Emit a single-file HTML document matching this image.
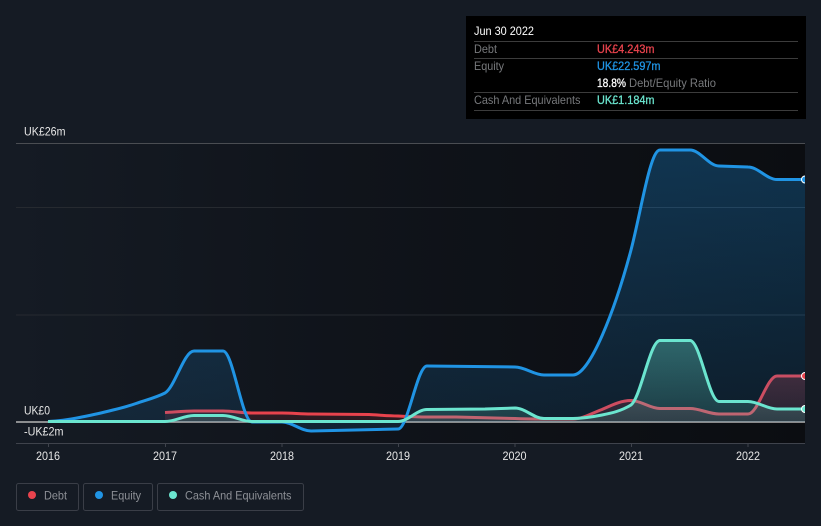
<!DOCTYPE html>
<html><head><meta charset="utf-8">
<style>
html,body{margin:0;padding:0;background:#151b24;width:821px;height:526px;overflow:hidden}
svg{display:block;font-family:"Liberation Sans",sans-serif}
</style></head><body>
<svg width="821" height="526" viewBox="0 0 821 526" xmlns="http://www.w3.org/2000/svg">
<defs>
<linearGradient id="bg" x1="0" x2="1" y1="0" y2="0"><stop offset="0" stop-color="#151b24"/><stop offset="0.4" stop-color="#10141b"/><stop offset="1" stop-color="#0b0d11"/></linearGradient>
<linearGradient id="eq" gradientUnits="userSpaceOnUse" x1="0" y1="144" x2="0" y2="422"><stop offset="0" stop-color="#1b8fe0" stop-opacity=".3"/><stop offset="1" stop-color="#1b8fe0" stop-opacity=".12"/></linearGradient>
<linearGradient id="ca" gradientUnits="userSpaceOnUse" x1="0" y1="340" x2="0" y2="422"><stop offset="0" stop-color="#6be5cf" stop-opacity=".34"/><stop offset="1" stop-color="#6be5cf" stop-opacity=".14"/></linearGradient>
<linearGradient id="de" gradientUnits="userSpaceOnUse" x1="0" y1="376" x2="0" y2="422"><stop offset="0" stop-color="#e8434d" stop-opacity=".26"/><stop offset="1" stop-color="#e8434d" stop-opacity=".12"/></linearGradient>
<clipPath id="clip"><rect x="16" y="130" width="789" height="320"/></clipPath>
</defs>
<rect width="821" height="526" fill="#151b24"/>
<rect x="16" y="144" width="789" height="299" fill="url(#bg)"/>
<line x1="16" x2="805" y1="143.500" y2="143.500" stroke="#4a4d52" stroke-width="1"/>
<line x1="16" x2="805" y1="207.500" y2="207.500" stroke="#262a30" stroke-width="1"/>
<line x1="16" x2="805" y1="315" y2="315" stroke="#262a30" stroke-width="1"/>
<line x1="16" x2="805" y1="443.500" y2="443.500" stroke="#3f434c" stroke-width="1"/>
<g stroke="#3f434c" stroke-width="1">
<line x1="48.500" x2="48.500" y1="443" y2="447"/><line x1="165.500" x2="165.500" y1="443" y2="447"/><line x1="282" x2="282" y1="443" y2="447"/><line x1="398.500" x2="398.500" y1="443" y2="447"/><line x1="515" x2="515" y1="443" y2="447"/><line x1="631.500" x2="631.500" y1="443" y2="447"/><line x1="748" x2="748" y1="443" y2="447"/>
</g>
<line x1="16" x2="805" y1="422" y2="422" stroke="#b4b4b4" stroke-width="1.500"/>

<g clip-path="url(#clip)" fill="none" stroke-linejoin="round">
<!-- debt -->
<path d="M165,412.500 C175,412 184,411 194,411 L223,411 C233,411 242,413 252,413 L282,413 C292,413 301,414 311,414 L369,414.500 C379,415 388,416 398,416 C408,416.500 417,417 427,417 L456,417 L515,418.500 C525,419 534,419 544,419 L573,419 C583,419 592,413 602,409.500 C612,405 621,400.500 631,400.500 C641,400.500 650,408.500 660,408.500 L690,408.500 C700,408.500 709,414 719,414 L748,414 C758,414 767,376 777,376 L805,376 L805,422 L165,422 Z" fill="url(#de)"/>
<path d="M165,412.500 C175,412 184,411 194,411 L223,411 C233,411 242,413 252,413 L282,413 C292,413 301,414 311,414 L369,414.500 C379,415 388,416 398,416 C408,416.500 417,417 427,417 L456,417 L515,418.500 C525,419 534,419 544,419 L573,419 C583,419 592,413 602,409.500 C612,405 621,400.500 631,400.500 C641,400.500 650,408.500 660,408.500 L690,408.500 C700,408.500 709,414 719,414 L748,414 C758,414 767,376 777,376 L805,376" stroke="#e8434d" stroke-width="3"/>
<!-- equity -->
<path d="M48,421.500 C58,421 67,420 77,418 C87,416 97,414 107,411.500 C117,409 126,407 136,403.500 C146,400 155,398 165,393 C175,387 184,351 194,351 L223,351 C233,351 242,422 252,422 L282,422 C292,422 301,431 311,431 L398,429 C408,429 417,366 427,366 L515,367 C525,367 534,375 544,375 L573,375 C590,375 615,310 631,250 C641,212 650,150 660,150 L690,150 C700,150 709,166 719,166 L748,167 C758,167 767,179.500 777,179.500 L805,179.500 L805,422 L48,422 Z" fill="url(#eq)"/>
<path d="M48,421.500 C58,421 67,420 77,418 C87,416 97,414 107,411.500 C117,409 126,407 136,403.500 C146,400 155,398 165,393 C175,387 184,351 194,351 L223,351 C233,351 242,422 252,422 L282,422 C292,422 301,431 311,431 L398,429 C408,429 417,366 427,366 L515,367 C525,367 534,375 544,375 L573,375 C590,375 615,310 631,250 C641,212 650,150 660,150 L690,150 C700,150 709,166 719,166 L748,167 C758,167 767,179.500 777,179.500 L805,179.500" stroke="#2094e4" stroke-width="3"/>
<!-- cash -->
<path d="M48,421.500 L165,421.500 C175,421.500 184,415.500 194,415.500 L223,415.500 C233,415.500 242,421.500 252,421.500 L398,421.500 C408,421.500 417,409.500 427,409.500 L485,409 L515,408 C525,408 534,418.500 544,418.500 L573,418.500 C583,418.500 592,417 602,415 C612,413 621,411 631,405 C641,397 650,340.500 660,340.500 L690,340.500 C700,340.500 709,401.500 719,401.500 L748,401.500 C758,401.500 767,409 777,409 L805,409 L805,422 L48,422 Z" fill="url(#ca)"/>
<path d="M48,421.500 L165,421.500 C175,421.500 184,415.500 194,415.500 L223,415.500 C233,415.500 242,421.500 252,421.500 L398,421.500 C408,421.500 417,409.500 427,409.500 L485,409 L515,408 C525,408 534,418.500 544,418.500 L573,418.500 C583,418.500 592,417 602,415 C612,413 621,411 631,405 C641,397 650,340.500 660,340.500 L690,340.500 C700,340.500 709,401.500 719,401.500 L748,401.500 C758,401.500 767,409 777,409 L805,409" stroke="#6be5cf" stroke-width="3"/>
<circle cx="805" cy="179.500" r="3.500" fill="#2094e4" stroke="#fff" stroke-width="1"/>
<circle cx="805" cy="376" r="3.500" fill="#e8434d" stroke="#fff" stroke-width="1"/>
<circle cx="805" cy="409" r="3.500" fill="#6be5cf" stroke="#fff" stroke-width="1"/>
</g>

<g font-size="12" fill="#e6e6e6">
<text x="24" y="135.500" textLength="41.500" lengthAdjust="spacingAndGlyphs">UK£26m</text>
<text x="24" y="414.500" textLength="26" lengthAdjust="spacingAndGlyphs">UK£0</text>
<text x="24" y="435.500" textLength="39.500" lengthAdjust="spacingAndGlyphs">-UK£2m</text>
<text x="36" y="460" textLength="24" lengthAdjust="spacingAndGlyphs">2016</text>
<text x="153" y="460" textLength="24" lengthAdjust="spacingAndGlyphs">2017</text>
<text x="270" y="460" textLength="24" lengthAdjust="spacingAndGlyphs">2018</text>
<text x="386" y="460" textLength="24" lengthAdjust="spacingAndGlyphs">2019</text>
<text x="502.500" y="460" textLength="24" lengthAdjust="spacingAndGlyphs">2020</text>
<text x="619" y="460" textLength="24" lengthAdjust="spacingAndGlyphs">2021</text>
<text x="736" y="460" textLength="24" lengthAdjust="spacingAndGlyphs">2022</text>
</g>

<!-- tooltip -->
<rect x="466" y="16" width="340" height="103" fill="#000"/>
<g stroke="#3c3c3c" stroke-width="1">
<line x1="474" x2="798" y1="41.500" y2="41.500"/><line x1="474" x2="798" y1="58.500" y2="58.500"/><line x1="474" x2="798" y1="92.500" y2="92.500"/><line x1="474" x2="798" y1="110.500" y2="110.500"/>
</g>
<g font-size="12">
<text x="474" y="35" fill="#fff" textLength="60" lengthAdjust="spacingAndGlyphs">Jun 30 2022</text>
<text x="474" y="53" fill="#77797c" textLength="23" lengthAdjust="spacingAndGlyphs">Debt</text>
<text x="474" y="70" fill="#77797c" textLength="30" lengthAdjust="spacingAndGlyphs">Equity</text>
<text x="474" y="104" fill="#77797c" textLength="106.500" lengthAdjust="spacingAndGlyphs">Cash And Equivalents</text>
<text x="597" y="53" fill="#e8434d" stroke="#e8434d" stroke-width=".3" textLength="57.500" lengthAdjust="spacingAndGlyphs">UK£4.243m</text>
<text x="597" y="70" fill="#2094e4" stroke="#2094e4" stroke-width=".3" textLength="63.500" lengthAdjust="spacingAndGlyphs">UK£22.597m</text>
<text x="597" y="87" fill="#fff" stroke="#fff" stroke-width=".3" textLength="29" lengthAdjust="spacingAndGlyphs">18.8%</text>
<text x="629" y="87" fill="#77797c" textLength="87" lengthAdjust="spacingAndGlyphs">Debt/Equity Ratio</text>
<text x="597" y="104" fill="#6be5cf" stroke="#6be5cf" stroke-width=".3" textLength="57.500" lengthAdjust="spacingAndGlyphs">UK£1.184m</text>
</g>

<!-- legend -->
<g fill="none" stroke="#3a3e47" stroke-width="1">
<rect x="16.500" y="483.500" width="62" height="27" rx="2"/>
<rect x="83.500" y="483.500" width="69" height="27" rx="2"/>
<rect x="157.500" y="483.500" width="146" height="27" rx="2"/>
</g>
<circle cx="32" cy="495" r="4" fill="#e8434d"/>
<circle cx="99" cy="495" r="4" fill="#2094e4"/>
<circle cx="173" cy="495" r="4" fill="#6be5cf"/>
<g font-size="12" fill="#8d9096">
<text x="44" y="499.500" textLength="23" lengthAdjust="spacingAndGlyphs">Debt</text>
<text x="111" y="499.500" textLength="30" lengthAdjust="spacingAndGlyphs">Equity</text>
<text x="185" y="499.500" textLength="106.500" lengthAdjust="spacingAndGlyphs">Cash And Equivalents</text>
</g>
</svg>
</body></html>
